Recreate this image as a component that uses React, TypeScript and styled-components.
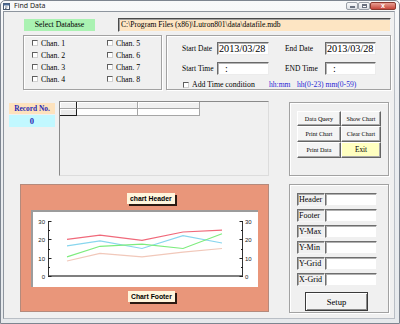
import styled, { createGlobalStyle } from "styled-components";

const SERIF = `"Liberation Serif", "Times New Roman", serif`;
const SANS = `"Liberation Sans", Arial, sans-serif`;

const GlobalStyle = createGlobalStyle`
  html, body { margin: 0; padding: 0; }
  body { background: #ffffff; font-family: ${SERIF}; }
`;

const channels = ["Chan. 1", "Chan. 2", "Chan. 3", "Chan. 4", "Chan. 5", "Chan. 6", "Chan. 7", "Chan. 8"];

const commands = [
  { label: "Data Query" },
  { label: "Show Chart" },
  { label: "Print Chart" },
  { label: "Clear Chart" },
  { label: "Print Data" },
  { label: "Exit", highlight: true },
];

const settings = ["Header", "Footer", "Y-Max", "Y-Min", "Y-Grid", "X-Grid"];

const series = [
  { color: "#f0697a", values: [20, 22.3, 19.5, 24, 25] },
  { color: "#88d6ee", values: [16.4, 19.2, 15, 22, 18] },
  { color: "#7eec7e", values: [10.4, 16.2, 17.4, 15, 23] },
  { color: "#f1c8ba", values: [8.2, 12.4, 10.4, 13, 15] },
];

// plot coordinates inside the white chart box
const PLOT = { left: 15.5, right: 209.5, top: 9, bottom: 64 };
const xs = [34, 67, 109, 150, 189];
const yOf = (v: number) => PLOT.bottom - (v * (PLOT.bottom - PLOT.top)) / 30;
const ticks = [0, 5, 10, 15, 20, 25, 30];

const Chart = () => (
  <svg width={225} height={75} style={{ display: "block" }}>
    {series.map((s) => (
      <polyline
        key={s.color}
        points={s.values.map((v, i) => `${xs[i]},${yOf(v).toFixed(1)}`).join(" ")}
        fill="none"
        stroke={s.color}
        strokeWidth={1.2}
      />
    ))}
    <line x1={PLOT.left} y1={PLOT.top} x2={PLOT.left} y2={PLOT.bottom} stroke="#333" />
    <line x1={PLOT.right} y1={PLOT.top} x2={PLOT.right} y2={PLOT.bottom} stroke="#333" />
    <line x1={PLOT.left} y1={PLOT.bottom} x2={PLOT.right} y2={PLOT.bottom} stroke="#555" strokeWidth={1.5} />
    {ticks.map((v) => {
      const y = Math.round(yOf(v)) + 0.5;
      const major = v % 10 === 0;
      return (
        <g key={v}>
          <line x1={PLOT.left - 0.5} y1={y} x2={PLOT.left + (major ? 3 : 1.5)} y2={y} stroke="#222" />
          <line x1={PLOT.right - (major ? 3 : 1.5)} y1={y} x2={PLOT.right + 0.5} y2={y} stroke="#222" />
          {major && (
            <>
              <text x={12} y={y + 2} fontSize={6} textAnchor="end" fill="#222" fontFamily={SANS}>
                {v}
              </text>
              <text x={212} y={y + 2} fontSize={6} fill="#222" fontFamily={SANS}>
                {v}
              </text>
            </>
          )}
        </g>
      );
    })}
  </svg>
);

const AppIcon = () => (
  <svg width={7} height={7} viewBox="0 0 7 7">
    <rect x={0.5} y={0.5} width={6} height={6} fill="#fff" stroke="#4a5a70" />
    <rect x={0.5} y={0.5} width={6} height={2} fill="#4a6a96" />
    <path d="M2 4 L4.5 4 M2 5.5 L3.5 5.5" stroke="#4a5a70" strokeWidth={0.8} />
  </svg>
);

export default function App() {
  return (
    <>
      <GlobalStyle />
      <Window>
        <TitleBar>
          <AppIcon />
          <Caption>Find Data</Caption>
          <CaptionButtons>
            <CapButton>
              <MinGlyph />
            </CapButton>
            <CapButton>
              <MaxGlyph />
            </CapButton>
            <CloseButton>x</CloseButton>
          </CaptionButtons>
        </TitleBar>
        <FrameBody>
          <Client>
            <TopRow>
              <SelectButton>Select Database</SelectButton>
              <PathField>C:\Program Files (x86)\Lutron801\data\datafile.mdb</PathField>
            </TopRow>

            <MiddleRow>
              <ChannelBox>
                {channels.map((c) => (
                  <CheckItem key={c}>
                    <CheckMark />
                    <span>{c}</span>
                  </CheckItem>
                ))}
              </ChannelBox>
              <DateBox>
                <DateRow>
                  <FieldLabel width={35}>Start Date</FieldLabel>
                  <DateInput width={52}>2013/03/28</DateInput>
                  <FieldLabel width={40} gap={16}>
                    End Date
                  </FieldLabel>
                  <DateInput width={51}>2013/03/28</DateInput>
                </DateRow>
                <DateRow top={7}>
                  <FieldLabel width={35}>Start Time</FieldLabel>
                  <DateInput width={52} indent={7}>
                    :
                  </DateInput>
                  <FieldLabel width={40} gap={16}>
                    END Time
                  </FieldLabel>
                  <DateInput width={51} indent={7}>
                    :
                  </DateInput>
                </DateRow>
                <ConditionRow>
                  <CheckItem>
                    <CheckMark />
                    <span>Add Time condition</span>
                  </CheckItem>
                  <Hint>hh:mm</Hint>
                  <Hint>hh(0-23) mm(0-59)</Hint>
                </ConditionRow>
              </DateBox>
            </MiddleRow>

            <ThirdRow>
              <RecordCol>
                <RecordLabel>Record No.</RecordLabel>
                <RecordValue>0</RecordValue>
              </RecordCol>
              <DataGrid>
                <HeadCell fixed />
                <HeadCell />
                <HeadCell />
                <FixedCell />
                <DataCell />
                <DataCell />
              </DataGrid>
              <ButtonBox>
                {commands.map((c) => (
                  <CmdButton key={c.label} highlight={c.highlight}>
                    {c.label}
                  </CmdButton>
                ))}
              </ButtonBox>
            </ThirdRow>

            <BottomRow>
              <ChartPanel>
                <ChartLabel offset={106}>chart Header</ChartLabel>
                <ChartBox>
                  <Chart />
                </ChartBox>
                <ChartLabel offset={107} top={4}>
                  Chart Footer
                </ChartLabel>
              </ChartPanel>
              <SettingsBox>
                {settings.map((s) => (
                  <SettingRow key={s}>
                    <SettingLabel>{s}</SettingLabel>
                    <SettingInput />
                  </SettingRow>
                ))}
                <SetupButton>Setup</SetupButton>
              </SettingsBox>
            </BottomRow>
          </Client>
        </FrameBody>
      </Window>
    </>
  );
}

const Window = styled.div`
  width: 400px;
  height: 324px;
  box-sizing: border-box;
  display: flex;
  flex-direction: column;
  border: 1px solid #7d8590;
  border-radius: 5px 5px 0 0;
  background: linear-gradient(180deg, #f8f9fa 0%, #eceef1 30%, #e6e9ec 100%);
  overflow: hidden;
`;

const TitleBar = styled.div`
  height: 10px;
  display: flex;
  align-items: center;
  padding-left: 2px;
`;

const Caption = styled.span`
  margin-left: 4px;
  font-family: "Noto Sans", "Open Sans", sans-serif;
  font-size: 7px;
  line-height: 10px;
  color: #1c1c1c;
`;

const CaptionButtons = styled.div`
  display: flex;
  margin-left: auto;
  margin-right: 3px;
  align-self: flex-start;
  margin-top: 1px;
`;

const CapButton = styled.div`
  width: 12px;
  height: 8px;
  box-sizing: border-box;
  display: flex;
  align-items: center;
  justify-content: center;
  border: 1px solid #9aa0a8;
  border-radius: 2px;
  background: linear-gradient(180deg, #f8f9fa, #dde1e6);
`;

const MinGlyph = styled.div`
  width: 5px;
  height: 2px;
  margin-top: 2px;
  border: 1px solid #6a7280;
  box-sizing: border-box;
  background: #fff;
`;

const MaxGlyph = styled.div`
  width: 5px;
  height: 4px;
  border: 1px solid #6a7280;
  border-top-width: 2px;
  box-sizing: border-box;
  background: #fff;
`;

const CloseButton = styled(CapButton)`
  width: 26px;
  border-color: #8a3a30;
  background: linear-gradient(180deg, #e9a094, #c6463a);
  color: #ffffff;
  font-family: ${SANS};
  font-weight: bold;
  font-size: 7px;
  line-height: 6px;
`;

const FrameBody = styled.div`
  flex: 1;
  display: flex;
  padding: 0 4px 4px 2px;
  min-height: 0;
`;

const Client = styled.div`
  flex: 1;
  display: flex;
  flex-direction: column;
  border: 1px solid;
  border-color: #8e959e #b9bec5 #b9bec5 #8e959e;
  background: #f0f0f0;
  min-width: 0;
`;

const TopRow = styled.div`
  display: flex;
  align-items: center;
  height: 14px;
  margin-top: 6px;
  padding-left: 20px;
`;

const SelectButton = styled.div`
  width: 71px;
  height: 12px;
  background: #aaf2b2;
  font-size: 7.8px;
  line-height: 12px;
  text-align: center;
  color: #000;
`;

const PathField = styled.div`
  width: 273px;
  height: 14px;
  margin-left: 23px;
  box-sizing: border-box;
  background: #fde5c3;
  border: 1px solid;
  border-color: #4a4a4a #f2f2f2 #f2f2f2 #4a4a4a;
  box-shadow: inset 1px 1px 0 #a0a0a0;
  padding-left: 2px;
  font-size: 7.6px;
  line-height: 12px;
  white-space: nowrap;
  overflow: hidden;
`;

const MiddleRow = styled.div`
  display: flex;
  gap: 4px;
  height: 55px;
  margin-top: 3px;
  padding-left: 19px;
`;

const GroupBox = styled.div`
  box-sizing: border-box;
  border: 1px solid #a2a2a2;
  box-shadow: inset 1px 1px 0 #ffffff, 1px 1px 0 #ffffff;
`;

const ChannelBox = styled(GroupBox)`
  width: 139px;
  display: grid;
  grid-template-rows: repeat(4, 12px);
  grid-template-columns: 75px 1fr;
  grid-auto-flow: column;
  padding: 1px 0 0 8px;
`;

const CheckItem = styled.div`
  display: flex;
  align-items: center;
  gap: 3px;
  font-size: 7.8px;
  color: #000;
  white-space: nowrap;
`;

const CheckMark = styled.span`
  width: 6px;
  height: 6px;
  box-sizing: border-box;
  flex: none;
  border: 1px solid;
  border-color: #5e5e5e #d0d0d0 #d0d0d0 #5e5e5e;
  background: #ffffff;
`;

const DateBox = styled(GroupBox)`
  width: 225px;
  display: flex;
  flex-direction: column;
  padding: 6px 0 0 15px;
`;

const DateRow = styled.div<{ top?: number }>`
  display: flex;
  align-items: center;
  height: 13px;
  margin-top: ${(p) => p.top ?? 0}px;
`;

const FieldLabel = styled.span<{ width: number; gap?: number }>`
  width: ${(p) => p.width}px;
  margin-left: ${(p) => p.gap ?? 0}px;
  font-size: 7.5px;
  white-space: nowrap;
`;

const DateInput = styled.div<{ width: number; indent?: number }>`
  width: ${(p) => p.width}px;
  height: 13px;
  box-sizing: border-box;
  background: #ffffff;
  border: 1px solid;
  border-color: #6a6a6a #ececec #ececec #6a6a6a;
  box-shadow: inset 1px 1px 0 #b4b4b4;
  padding-left: ${(p) => p.indent ?? 1}px;
  font-size: 10.2px;
  line-height: 12px;
  white-space: nowrap;
  overflow: hidden;
`;

const ConditionRow = styled.div`
  display: grid;
  grid-template-columns: 86px 28px auto;
  align-items: center;
  height: 10px;
  margin-top: 5px;
  padding-left: 1px;
  font-size: 7.4px;
`;

const Hint = styled.span`
  color: #2a2ad6;
  font-size: 7.6px;
  white-space: nowrap;
`;

const ThirdRow = styled.div`
  display: flex;
  align-items: flex-start;
  height: 76px;
  margin-top: 11px;
  padding-left: 5px;
`;

const RecordCol = styled.div`
  width: 46px;
  display: flex;
  flex-direction: column;
  margin-top: 2px;
  gap: 1px;
  font-weight: bold;
  color: #2a2ab4;
  text-align: center;
`;

const RecordLabel = styled.div`
  height: 11px;
  background: #fde2bd;
  font-size: 7.4px;
  line-height: 11px;
`;

const RecordValue = styled.div`
  height: 12px;
  background: #c2f8ff;
  font-size: 8.6px;
  line-height: 12px;
`;

const DataGrid = styled.div`
  width: 210px;
  height: 75px;
  margin-left: 4px;
  box-sizing: border-box;
  border: 1px solid;
  border-color: #8a8a8a #dcdcdc #dcdcdc #8a8a8a;
  background: #f0f0f0;
  display: grid;
  grid-template-columns: 17px 61px 62px;
  grid-template-rows: 7px 7px;
  align-content: start;
  justify-content: start;
`;

const HeadCell = styled.div<{ fixed?: boolean }>`
  box-sizing: border-box;
  background: #f0f0f0;
  border-right: 1px solid ${(p) => (p.fixed ? "#1e1e1e" : "#a6a6a6")};
  border-bottom: 1px solid #a6a6a6;
  box-shadow: inset 1px 1px 0 #ffffff;
`;

const FixedCell = styled.div`
  box-sizing: border-box;
  background: #ebebeb;
  border-right: 1px solid #1e1e1e;
  border-bottom: 1px solid #1e1e1e;
  box-shadow: inset 1px 1px 0 #ffffff;
`;

const DataCell = styled.div`
  box-sizing: border-box;
  background: #ffffff;
  border-right: 1px solid #a6a6a6;
  border-bottom: 1px solid #a6a6a6;
`;

const ButtonBox = styled(GroupBox)`
  width: 100px;
  height: 74px;
  margin-left: 20px;
  margin-top: 1px;
  padding: 8px 0 0 7px;
  display: grid;
  grid-template-columns: 44px 40px;
  grid-template-rows: 15px 16px 16px;
  align-content: start;
`;

const CmdButton = styled.button<{ highlight?: boolean }>`
  margin: 0;
  padding: 0;
  box-sizing: border-box;
  display: flex;
  align-items: center;
  justify-content: center;
  border: 1px solid;
  border-color: #ffffff #646464 #646464 #ffffff;
  box-shadow: inset -1px -1px 0 #a8a8a8;
  background: ${(p) => (p.highlight ? "#ffffc0" : "#f4f4f4")};
  font-family: ${SERIF};
  font-size: ${(p) => (p.highlight ? 7.2 : 6.1)}px;
  color: #000;
  white-space: nowrap;
`;

const BottomRow = styled.div`
  display: flex;
  align-items: flex-start;
  margin-top: 7px;
  padding-left: 16px;
`;

const ChartPanel = styled.div`
  width: 249px;
  height: 128px;
  box-sizing: border-box;
  background: #e9967a;
  border: 1px solid #b48a7c;
  display: flex;
  flex-direction: column;
  align-items: flex-start;
  padding: 8px 0 0 10px;
`;

const ChartLabel = styled.div<{ offset: number; top?: number }>`
  height: 11px;
  margin-left: ${(p) => p.offset - 10}px;
  margin-top: ${(p) => p.top ?? 0}px;
  padding: 0 3px;
  background: #fff5dc;
  box-shadow: 2px 2px 0 #2b1a12;
  font-family: ${SANS};
  font-weight: bold;
  font-size: 6.8px;
  line-height: 11px;
  color: #000;
  white-space: nowrap;
`;

const ChartBox = styled.div`
  width: 227px;
  height: 77px;
  margin-top: 6px;
  box-sizing: border-box;
  background: #ffffff;
  border-top: 2px solid #9c9c9c;
  border-left: 2px solid #9c9c9c;
`;

const SettingsBox = styled(GroupBox)`
  width: 100px;
  height: 129px;
  margin-left: 20px;
  padding: 8px 0 0 7px;
  display: flex;
  flex-direction: column;
  gap: 3px;
`;

const SettingRow = styled.div`
  display: flex;
  height: 13px;
`;

const SettingLabel = styled.div`
  width: 28px;
  box-sizing: border-box;
  border: 1px solid;
  border-color: #6e6e6e #f6f6f6 #f6f6f6 #6e6e6e;
  box-shadow: inset 1px 1px 0 #a4a4a4;
  padding-left: 1px;
  font-size: 8px;
  line-height: 11px;
  white-space: nowrap;
  overflow: hidden;
`;

const SettingInput = styled.div`
  width: 52px;
  box-sizing: border-box;
  background: #ffffff;
  border: 1px solid;
  border-color: #6e6e6e #f0f0f0 #f0f0f0 #6e6e6e;
  box-shadow: inset 1px 1px 0 #b0b0b0;
`;

const SetupButton = styled.button`
  width: 63px;
  height: 19px;
  margin: 3px 0 0 8px;
  padding: 0;
  box-sizing: border-box;
  border: 1px solid #3a3a3a;
  box-shadow: inset 1px 1px 0 #ffffff, inset -1px -1px 0 #8a8a8a;
  background: #f2f2f2;
  font-family: ${SERIF};
  font-size: 8.6px;
  color: #000;
`;
